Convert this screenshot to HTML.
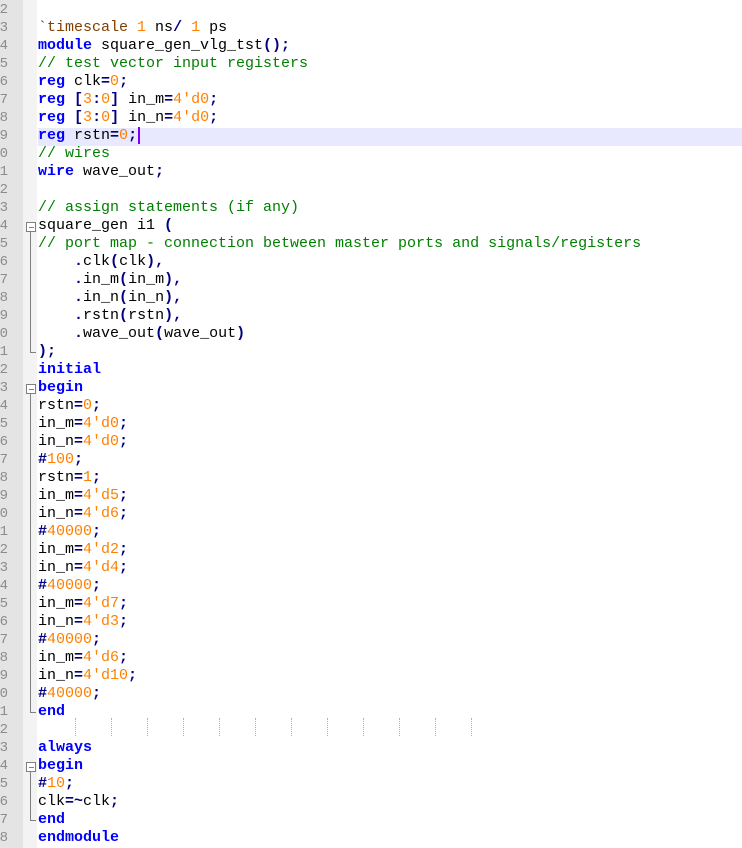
<!DOCTYPE html>
<html><head><meta charset="utf-8"><style>
html,body{margin:0;padding:0;}
body{width:742px;height:848px;overflow:hidden;background:#fff;position:relative;font-family:"Liberation Mono","Courier New",monospace;font-size:15px;}
#gut{position:absolute;left:0;top:0;width:23px;height:848px;background:#e4e4e4;}
#fold{position:absolute;left:23px;top:0;width:14px;height:848px;background:#f3f3f3;}
.n{position:absolute;right:734px;width:40px;text-align:right;color:#8c8c8c;height:18px;line-height:18px;font-size:14px;}
.l{position:absolute;left:38px;height:18px;line-height:18px;white-space:pre;color:#000;}
.k{color:#0000ff;font-weight:bold}
.c{color:#008000}
.d{color:#ff8000}
.o{color:#000080;font-weight:bold}
.p{color:#804000}
.hl{position:absolute;left:38px;width:704px;height:18px;background:#e8e8ff;}
.box{position:absolute;left:26px;width:8px;height:8px;border:1px solid #808080;background:#fff;}
.box:after{content:"";position:absolute;left:2px;top:4px;width:5px;height:1px;background:#808080;}
.vl{position:absolute;left:30px;width:1px;background:#808080;}
.hz{position:absolute;left:30px;width:6px;height:1px;background:#808080;}
.g{position:absolute;top:718px;height:18px;border-left:1px dotted #b0b0b0;}
</style></head><body>
<div id="gut"></div><div id="fold"></div>
<div class="hl" style="top:128px"></div>
<div id="nums"></div>
<script>
var s='';for(var i=2;i<=48;i++){s+='<div class="n" style="top:'+(1+(i-2)*18)+'px;right:734px">'+i+'</div>';}
document.getElementById('nums').innerHTML=s;
</script>
<div class="l" style="top:19px"><span class="p">`timescale</span> <span class="d">1</span> ns<span class="o">/</span> <span class="d">1</span> ps</div>
<div class="l" style="top:37px"><span class="k">module</span> square_gen_vlg_tst<span class="o">();</span></div>
<div class="l" style="top:55px"><span class="c">// test vector input registers</span></div>
<div class="l" style="top:73px"><span class="k">reg</span> clk<span class="o">=</span><span class="d">0</span><span class="o">;</span></div>
<div class="l" style="top:91px"><span class="k">reg</span> <span class="o">[</span><span class="d">3</span><span class="o">:</span><span class="d">0</span><span class="o">]</span> in_m<span class="o">=</span><span class="d">4'd0</span><span class="o">;</span></div>
<div class="l" style="top:109px"><span class="k">reg</span> <span class="o">[</span><span class="d">3</span><span class="o">:</span><span class="d">0</span><span class="o">]</span> in_n<span class="o">=</span><span class="d">4'd0</span><span class="o">;</span></div>
<div class="l" style="top:127px"><span class="k">reg</span> rstn<span class="o">=</span><span class="d">0</span><span class="o">;</span><span style="border-left:2px solid #8000ff;margin-left:1px"></span></div>
<div class="l" style="top:145px"><span class="c">// wires</span></div>
<div class="l" style="top:163px"><span class="k">wire</span> wave_out<span class="o">;</span></div>
<div class="l" style="top:199px"><span class="c">// assign statements (if any)</span></div>
<div class="l" style="top:217px">square_gen i1 <span class="o">(</span></div>
<div class="l" style="top:235px"><span class="c">// port map - connection between master ports and signals/registers</span></div>
<div class="l" style="top:253px">    <span class="o">.</span>clk<span class="o">(</span>clk<span class="o">),</span></div>
<div class="l" style="top:271px">    <span class="o">.</span>in_m<span class="o">(</span>in_m<span class="o">),</span></div>
<div class="l" style="top:289px">    <span class="o">.</span>in_n<span class="o">(</span>in_n<span class="o">),</span></div>
<div class="l" style="top:307px">    <span class="o">.</span>rstn<span class="o">(</span>rstn<span class="o">),</span></div>
<div class="l" style="top:325px">    <span class="o">.</span>wave_out<span class="o">(</span>wave_out<span class="o">)</span></div>
<div class="l" style="top:343px"><span class="o">);</span></div>
<div class="l" style="top:361px"><span class="k">initial</span></div>
<div class="l" style="top:379px"><span class="k">begin</span></div>
<div class="l" style="top:397px">rstn<span class="o">=</span><span class="d">0</span><span class="o">;</span></div>
<div class="l" style="top:415px">in_m<span class="o">=</span><span class="d">4'd0</span><span class="o">;</span></div>
<div class="l" style="top:433px">in_n<span class="o">=</span><span class="d">4'd0</span><span class="o">;</span></div>
<div class="l" style="top:451px"><span class="o">#</span><span class="d">100</span><span class="o">;</span></div>
<div class="l" style="top:469px">rstn<span class="o">=</span><span class="d">1</span><span class="o">;</span></div>
<div class="l" style="top:487px">in_m<span class="o">=</span><span class="d">4'd5</span><span class="o">;</span></div>
<div class="l" style="top:505px">in_n<span class="o">=</span><span class="d">4'd6</span><span class="o">;</span></div>
<div class="l" style="top:523px"><span class="o">#</span><span class="d">40000</span><span class="o">;</span></div>
<div class="l" style="top:541px">in_m<span class="o">=</span><span class="d">4'd2</span><span class="o">;</span></div>
<div class="l" style="top:559px">in_n<span class="o">=</span><span class="d">4'd4</span><span class="o">;</span></div>
<div class="l" style="top:577px"><span class="o">#</span><span class="d">40000</span><span class="o">;</span></div>
<div class="l" style="top:595px">in_m<span class="o">=</span><span class="d">4'd7</span><span class="o">;</span></div>
<div class="l" style="top:613px">in_n<span class="o">=</span><span class="d">4'd3</span><span class="o">;</span></div>
<div class="l" style="top:631px"><span class="o">#</span><span class="d">40000</span><span class="o">;</span></div>
<div class="l" style="top:649px">in_m<span class="o">=</span><span class="d">4'd6</span><span class="o">;</span></div>
<div class="l" style="top:667px">in_n<span class="o">=</span><span class="d">4'd10</span><span class="o">;</span></div>
<div class="l" style="top:685px"><span class="o">#</span><span class="d">40000</span><span class="o">;</span></div>
<div class="l" style="top:703px"><span class="k">end</span></div>
<div class="l" style="top:739px"><span class="k">always</span></div>
<div class="l" style="top:757px"><span class="k">begin</span></div>
<div class="l" style="top:775px"><span class="o">#</span><span class="d">10</span><span class="o">;</span></div>
<div class="l" style="top:793px">clk<span class="o">=~</span>clk<span class="o">;</span></div>
<div class="l" style="top:811px"><span class="k">end</span></div>
<div class="l" style="top:829px"><span class="k">endmodule</span></div>
<!-- fold markers -->
<div class="box" style="top:222px"></div><div class="vl" style="top:232px;height:120px"></div><div class="hz" style="top:352px"></div>
<div class="box" style="top:384px"></div><div class="vl" style="top:394px;height:318px"></div><div class="hz" style="top:712px"></div>
<div class="box" style="top:762px"></div><div class="vl" style="top:772px;height:48px"></div><div class="hz" style="top:820px"></div>
<!-- indent guides -->
<div class="g" style="left:75px"></div><div class="g" style="left:111px"></div><div class="g" style="left:147px"></div><div class="g" style="left:183px"></div><div class="g" style="left:219px"></div><div class="g" style="left:255px"></div><div class="g" style="left:291px"></div><div class="g" style="left:327px"></div><div class="g" style="left:363px"></div><div class="g" style="left:399px"></div><div class="g" style="left:435px"></div><div class="g" style="left:471px"></div>
</body></html>
